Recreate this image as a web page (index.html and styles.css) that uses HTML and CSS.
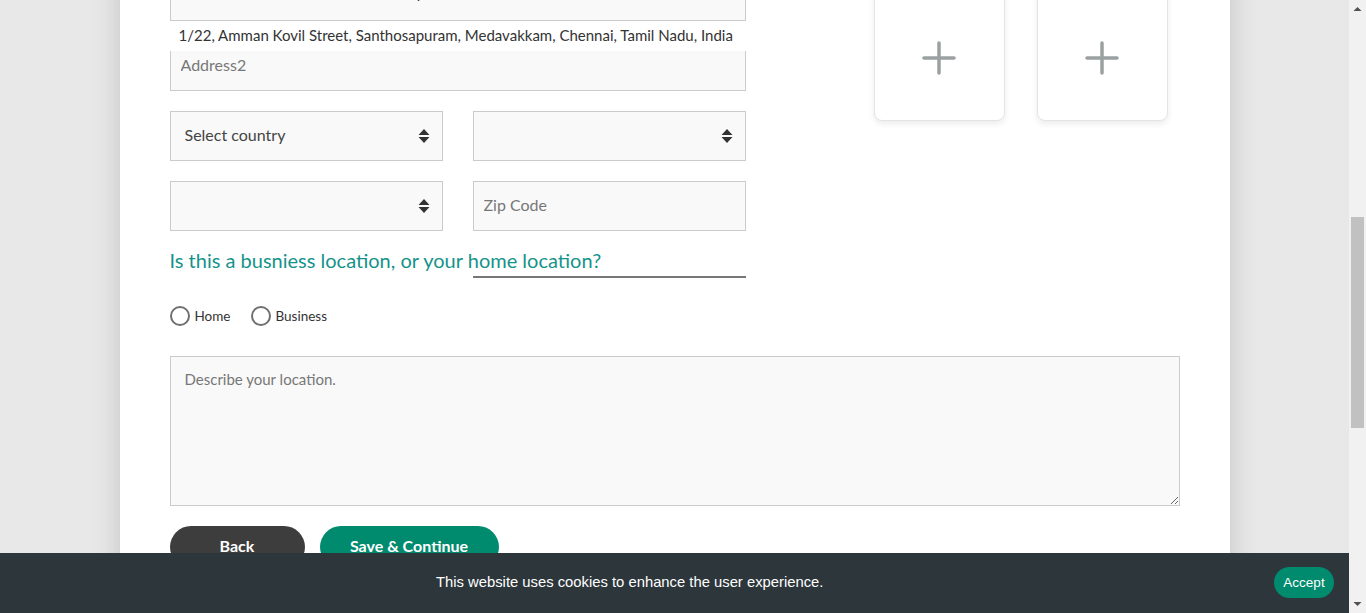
FILE: index.html
```html
<!DOCTYPE html>
<html lang="en">
<head>
<meta charset="utf-8">
<title>Add your location</title>
<link rel="stylesheet" href="styles.css">
</head>
<body>
<main class="panel">
  <header class="intro">
    <h1 class="intro-title">Where is your space located?</h1>
    <p class="intro-text">Tell guests where to find you.</p>
  </header>
  <form class="form">
    <div class="top">
      <div class="fields">
        <div class="field-wrap">
          <input class="input input-value" type="text" value="1/22, Amman Kovil Street, Santhosapuram, Medavakkam">
          <div class="suggest">1/22, Amman Kovil Street, Santhosapuram, Medavakkam, Chennai, Tamil Nadu, India</div>
        </div>
        <input class="input" type="text" placeholder="Address2">
        <div class="pair">
          <div class="select-wrap">
            <select class="select"><option>Select country</option></select>
            <svg class="arrows" width="12" height="16" viewBox="0 0 12 16"><path d="M6 1 L11.5 7 H0.5 Z M6 15 L11.5 9 H0.5 Z" fill="#333"/></svg>
          </div>
          <div class="select-wrap">
            <select class="select"><option></option></select>
            <svg class="arrows" width="12" height="16" viewBox="0 0 12 16"><path d="M6 1 L11.5 7 H0.5 Z M6 15 L11.5 9 H0.5 Z" fill="#333"/></svg>
          </div>
        </div>
        <div class="pair">
          <div class="select-wrap">
            <select class="select"><option></option></select>
            <svg class="arrows" width="12" height="16" viewBox="0 0 12 16"><path d="M6 1 L11.5 7 H0.5 Z M6 15 L11.5 9 H0.5 Z" fill="#333"/></svg>
          </div>
          <input class="input" type="text" placeholder="Zip Code">
        </div>
        <div class="pair question-row">
          <p class="question">Is this a busniess location, or your home location?</p>
          <span class="question-line"></span>
        </div>
      </div>
      <div class="uploads">
        <button class="upload" type="button" aria-label="Add photo">
          <svg width="34" height="34" viewBox="0 0 34 34"><path d="M17 2 V32 M2 17 H32" stroke="#9ba1a1" stroke-width="3.5" stroke-linecap="round" fill="none"/></svg>
        </button>
        <button class="upload" type="button" aria-label="Add photo">
          <svg width="34" height="34" viewBox="0 0 34 34"><path d="M17 2 V32 M2 17 H32" stroke="#9ba1a1" stroke-width="3.5" stroke-linecap="round" fill="none"/></svg>
        </button>
      </div>
    </div>
    <div class="radios">
      <label class="radio"><input type="radio" name="kind"><span class="dot"></span>Home</label>
      <label class="radio"><input type="radio" name="kind"><span class="dot"></span>Business</label>
    </div>
    <textarea class="describe" placeholder="Describe your location."></textarea>
    <div class="actions">
      <button class="btn btn-back" type="button">Back</button>
      <button class="btn btn-save" type="button">Save &amp; Continue</button>
    </div>
  </form>
</main>
<div class="cookie">
  <p class="cookie-text">This website uses cookies to enhance the user experience.</p>
  <button class="accept" type="button">Accept</button>
</div>
<div class="scrollbar" aria-hidden="true">
  <svg class="sb-arrow" width="17" height="17" viewBox="0 0 17 17"><path d="M4.5 11 L8.5 7 L12.5 11 Z" fill="#505050"/></svg>
  <div class="sb-track"><div class="sb-thumb"></div></div>
  <svg class="sb-arrow" width="17" height="17" viewBox="0 0 17 17"><path d="M4.5 6 L8.5 10 L12.5 6 Z" fill="#505050"/></svg>
</div>
<script src="script.js"></script>
</body>
</html>
```

FILE: styles.css
```css
* { box-sizing: border-box; }
body {
  margin: 0 17px 0 0;
  background: #e8e8e8;
  font-family: "Lato", "Open Sans", sans-serif;
  color: #333;
}
.panel {
  width: 1110px;
  margin: 0 auto;
  background: #fff;
  padding: 0 50px 534px;
  box-shadow: 0 0 26px rgba(0, 0, 0, 0.16);
}
.intro {
  height: 552px;
  padding-top: 60px;
}
.intro-title { margin: 0 0 10px; font-size: 28px; color: #138f85; font-weight: 400; }
.intro-text { margin: 0; font-size: 15px; color: #666; }

.top {
  display: grid;
  grid-template-columns: 576px minmax(0, 1fr);
}
.fields {
  display: flex;
  flex-direction: column;
  gap: 20px;
}
.field-wrap { position: relative; }
.input {
  display: block;
  width: 100%;
  height: 50px;
  border: 1px solid #cbcbcb;
  background: #f9f9f9;
  padding: 0 10px 4px;
  font: 16px "Lato", sans-serif;
  color: #333;
  outline: none;
}
.input::placeholder { color: #777; }
.input-value { font-size: 15px; padding: 0 9px 8px; color: #333; }
.suggest {
  position: absolute;
  left: 0;
  right: 0;
  top: 50px;
  height: 30px;
  background: #fff;
  padding: 5px 9px 0;
  font-size: 15px;
  color: #333;
  white-space: nowrap;
  z-index: 2;
}
.pair {
  display: grid;
  grid-template-columns: minmax(0, 1fr) minmax(0, 1fr);
  gap: 30px;
}
.select-wrap { position: relative; }
.select {
  appearance: none;
  -webkit-appearance: none;
  display: block;
  width: 100%;
  height: 50px;
  border: 1px solid #cbcbcb;
  border-radius: 0;
  background: #f9f9f9;
  padding: 0 14px 4px;
  font: 16px "Lato", sans-serif;
  color: #444;
}
.arrows {
  position: absolute;
  right: 13px;
  top: 17px;
  pointer-events: none;
}
.question-row { height: 27px; }
.question {
  margin: 0;
  font-size: 20px;
  line-height: 18px;
  color: #14938a;
  white-space: nowrap;
}
.question-line { border-bottom: 2px solid #777; }

.uploads {
  display: flex;
  gap: 32px;
  padding-left: 128px;
  margin-top: 19px;
  align-items: flex-start;
}
.upload {
  width: 131px;
  height: 131px;
  background: #fff;
  border: 1px solid #e4e4e4;
  border-radius: 8px;
  box-shadow: 0 3px 6px rgba(0, 0, 0, 0.08);
  display: flex;
  align-items: center;
  justify-content: center;
  padding: 4px 0 0;
}

.radios {
  display: flex;
  gap: 20px;
  margin-top: 28px;
}
.radio {
  display: inline-flex;
  align-items: center;
  gap: 5px;
  font-size: 13.5px;
  color: #333;
}
.radio input { display: none; }
.dot {
  width: 20px;
  height: 20px;
  border: 2px solid #707070;
  border-radius: 50%;
}
.describe {
  display: block;
  width: 100%;
  height: 150px;
  margin-top: 30px;
  border: 1px solid #cbcbcb;
  background: #f9f9f9;
  padding: 13px 14px;
  font: 15px "Lato", sans-serif;
  color: #333;
  resize: both;
}
.describe::placeholder { color: #777; }
.actions {
  display: flex;
  gap: 15px;
  margin-top: 20px;
}
.btn {
  height: 42px;
  border: none;
  border-radius: 21px;
  color: #fff;
  font: 700 16px "Lato", sans-serif;
  padding: 0 0 4px;
}
.btn-back { width: 135px; background: #3d3d3d; }
.btn-save { width: 179px; background: #008a6e; }

.cookie {
  position: fixed;
  left: 0;
  right: 17px;
  bottom: 0;
  height: 60px;
  background: #2c363b;
  display: flex;
  align-items: center;
  justify-content: space-between;
  padding: 0 15px 2px 436px;
  z-index: 10;
}
.cookie-text {
  margin: 0;
  color: #fff;
  font: 14.8px "Liberation Sans", Arial, sans-serif;
}
.accept {
  width: 60px;
  height: 31px;
  border: none;
  border-radius: 16px;
  background: #008a6e;
  color: #fff;
  font: 13.5px "Liberation Sans", Arial, sans-serif;
  padding: 0;
}

.scrollbar {
  position: fixed;
  top: 0;
  right: 0;
  bottom: 0;
  width: 17px;
  background: #f1f1f1;
  display: flex;
  flex-direction: column;
  z-index: 20;
}
.sb-arrow { display: block; flex: none; }
.sb-track { flex: 1; padding-top: 200px; }
.sb-thumb {
  width: 13px;
  height: 211px;
  margin-left: 2px;
  background: #c1c1c1;
}
```

FILE: script.js
```js
window.scrollTo(0, 581);
window.addEventListener('load', function () {
  window.scrollTo(0, 581);
});
```
